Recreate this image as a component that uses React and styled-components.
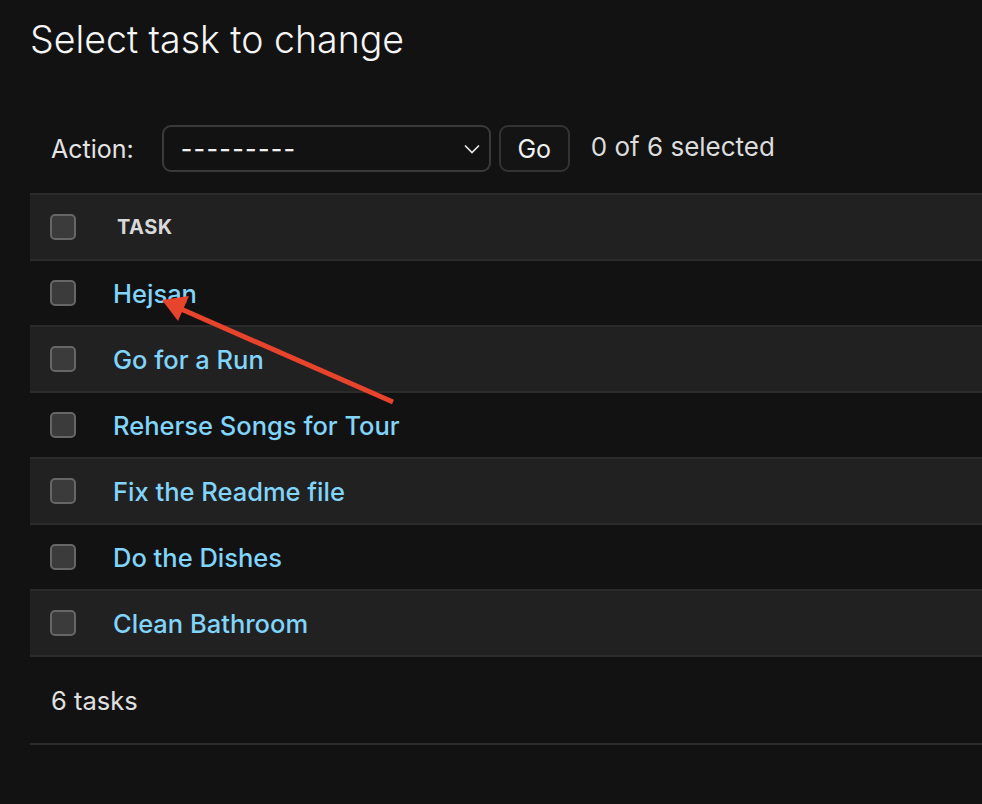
import styled, { createGlobalStyle } from "styled-components";

const tasks = [
  "Hejsan",
  "Go for a Run",
  "Reherse Songs for Tour",
  "Fix the Readme file",
  "Do the Dishes",
  "Clean Bathroom",
];

const GlobalStyle = createGlobalStyle`
  html, body {
    margin: 0;
    background: #121212;
  }
  body {
    font-family: Inter, "Liberation Sans", sans-serif;
    color: #e0e0e0;
  }
`;

function App() {
  return (
    <Page>
      <GlobalStyle />
      <Title>Select task to change</Title>
      <Actions>
        <Label>Action:</Label>
        <Select>
          <span>---------</span>
          <svg width="16" height="10" viewBox="0 0 16 10">
            <polyline
              points="1,1.5 8,8.5 15,1.5"
              fill="none"
              stroke="#e8e8e8"
              strokeWidth="1.7"
            />
          </svg>
        </Select>
        <GoButton>Go</GoButton>
        <Counter>0 of 6 selected</Counter>
      </Actions>
      <Table>
        <Row $alt>
          <CheckCell>
            <Checkbox />
          </CheckCell>
          <HeadLabel>Task</HeadLabel>
        </Row>
        {tasks.map((t, i) => (
          <Row key={t} $alt={i % 2 === 1}>
            <CheckCell>
              <Checkbox />
            </CheckCell>
            <TaskLink>{t}</TaskLink>
          </Row>
        ))}
      </Table>
      <Footer>6 tasks</Footer>
      <Arrow width="982" height="804" viewBox="0 0 982 804">
        <line
          x1="393"
          y1="402"
          x2="181"
          y2="309"
          stroke="#e8432b"
          strokeWidth="5"
        />
        <polygon points="162,300 189,296 178,321" fill="#e8432b" />
      </Arrow>
    </Page>
  );
}

export default App;

const Page = styled.div`
  position: relative;
  padding: 18px 0 60px 30px;
  min-height: 804px;
  box-sizing: border-box;
  overflow: hidden;
`;

const Title = styled.h1`
  margin: 0;
  font-size: 37.5px;
  font-weight: 300;
  line-height: 44px;
  color: #f5f5f5;
`;

const Actions = styled.div`
  display: flex;
  align-items: center;
  height: 47px;
  margin: 63px 0 21px;
  padding-left: 21px;
`;

const Label = styled.span`
  font-size: 25px;
  color: #e4e4e4;
  margin-right: 28px;
`;

const Select = styled.div`
  display: flex;
  align-items: center;
  justify-content: space-between;
  box-sizing: border-box;
  width: 329px;
  height: 47px;
  padding: 0 9px 0 17px;
  border: 2px solid #3a3a3a;
  border-radius: 9px;
  font-size: 25px;
  font-weight: 500;
  color: #f0f0f0;
  letter-spacing: 1.3px;
`;

const GoButton = styled.button`
  box-sizing: border-box;
  width: 71px;
  height: 47px;
  margin-left: 8px;
  background: #141414;
  border: 2px solid #333;
  border-radius: 9px;
  font-family: Inter, "Liberation Sans", sans-serif;
  font-size: 25px;
  color: #f2f2f2;
`;

const Counter = styled.span`
  margin-left: 21px;
  margin-top: -5px;
  font-size: 26px;
  color: #dcdcdc;
`;

const Table = styled.div`
  border-top: 2px solid #2b2b2b;
`;

const Row = styled.div`
  display: grid;
  grid-template-columns: 83px 1fr;
  align-items: center;
  height: 64px;
  border-bottom: 2px solid #2b2b2b;
  background: ${(p) => (p.$alt ? "#212121" : "#121212")};
`;

const CheckCell = styled.div`
  padding-left: 20px;
  display: flex;
  align-items: center;
`;

const Checkbox = styled.span`
  box-sizing: border-box;
  width: 26px;
  height: 26px;
  border: 2px solid #666;
  border-radius: 5px;
  background: #3b3b3b;
`;

const HeadLabel = styled.span`
  padding-left: 4px;
  font-size: 20px;
  font-weight: 700;
  text-transform: uppercase;
  letter-spacing: 0.5px;
  color: #d8d8d8;
`;

const TaskLink = styled.a`
  font-size: 25.5px;
  font-weight: 500;
  color: #81d4fa;
  cursor: pointer;
`;

const Footer = styled.div`
  display: flex;
  align-items: center;
  height: 86px;
  padding-left: 21px;
  border-bottom: 2px solid #2b2b2b;
  font-size: 25.5px;
  color: #e0e0e0;
`;

const Arrow = styled.svg`
  position: absolute;
  left: 0;
  top: 0;
  pointer-events: none;
`;
